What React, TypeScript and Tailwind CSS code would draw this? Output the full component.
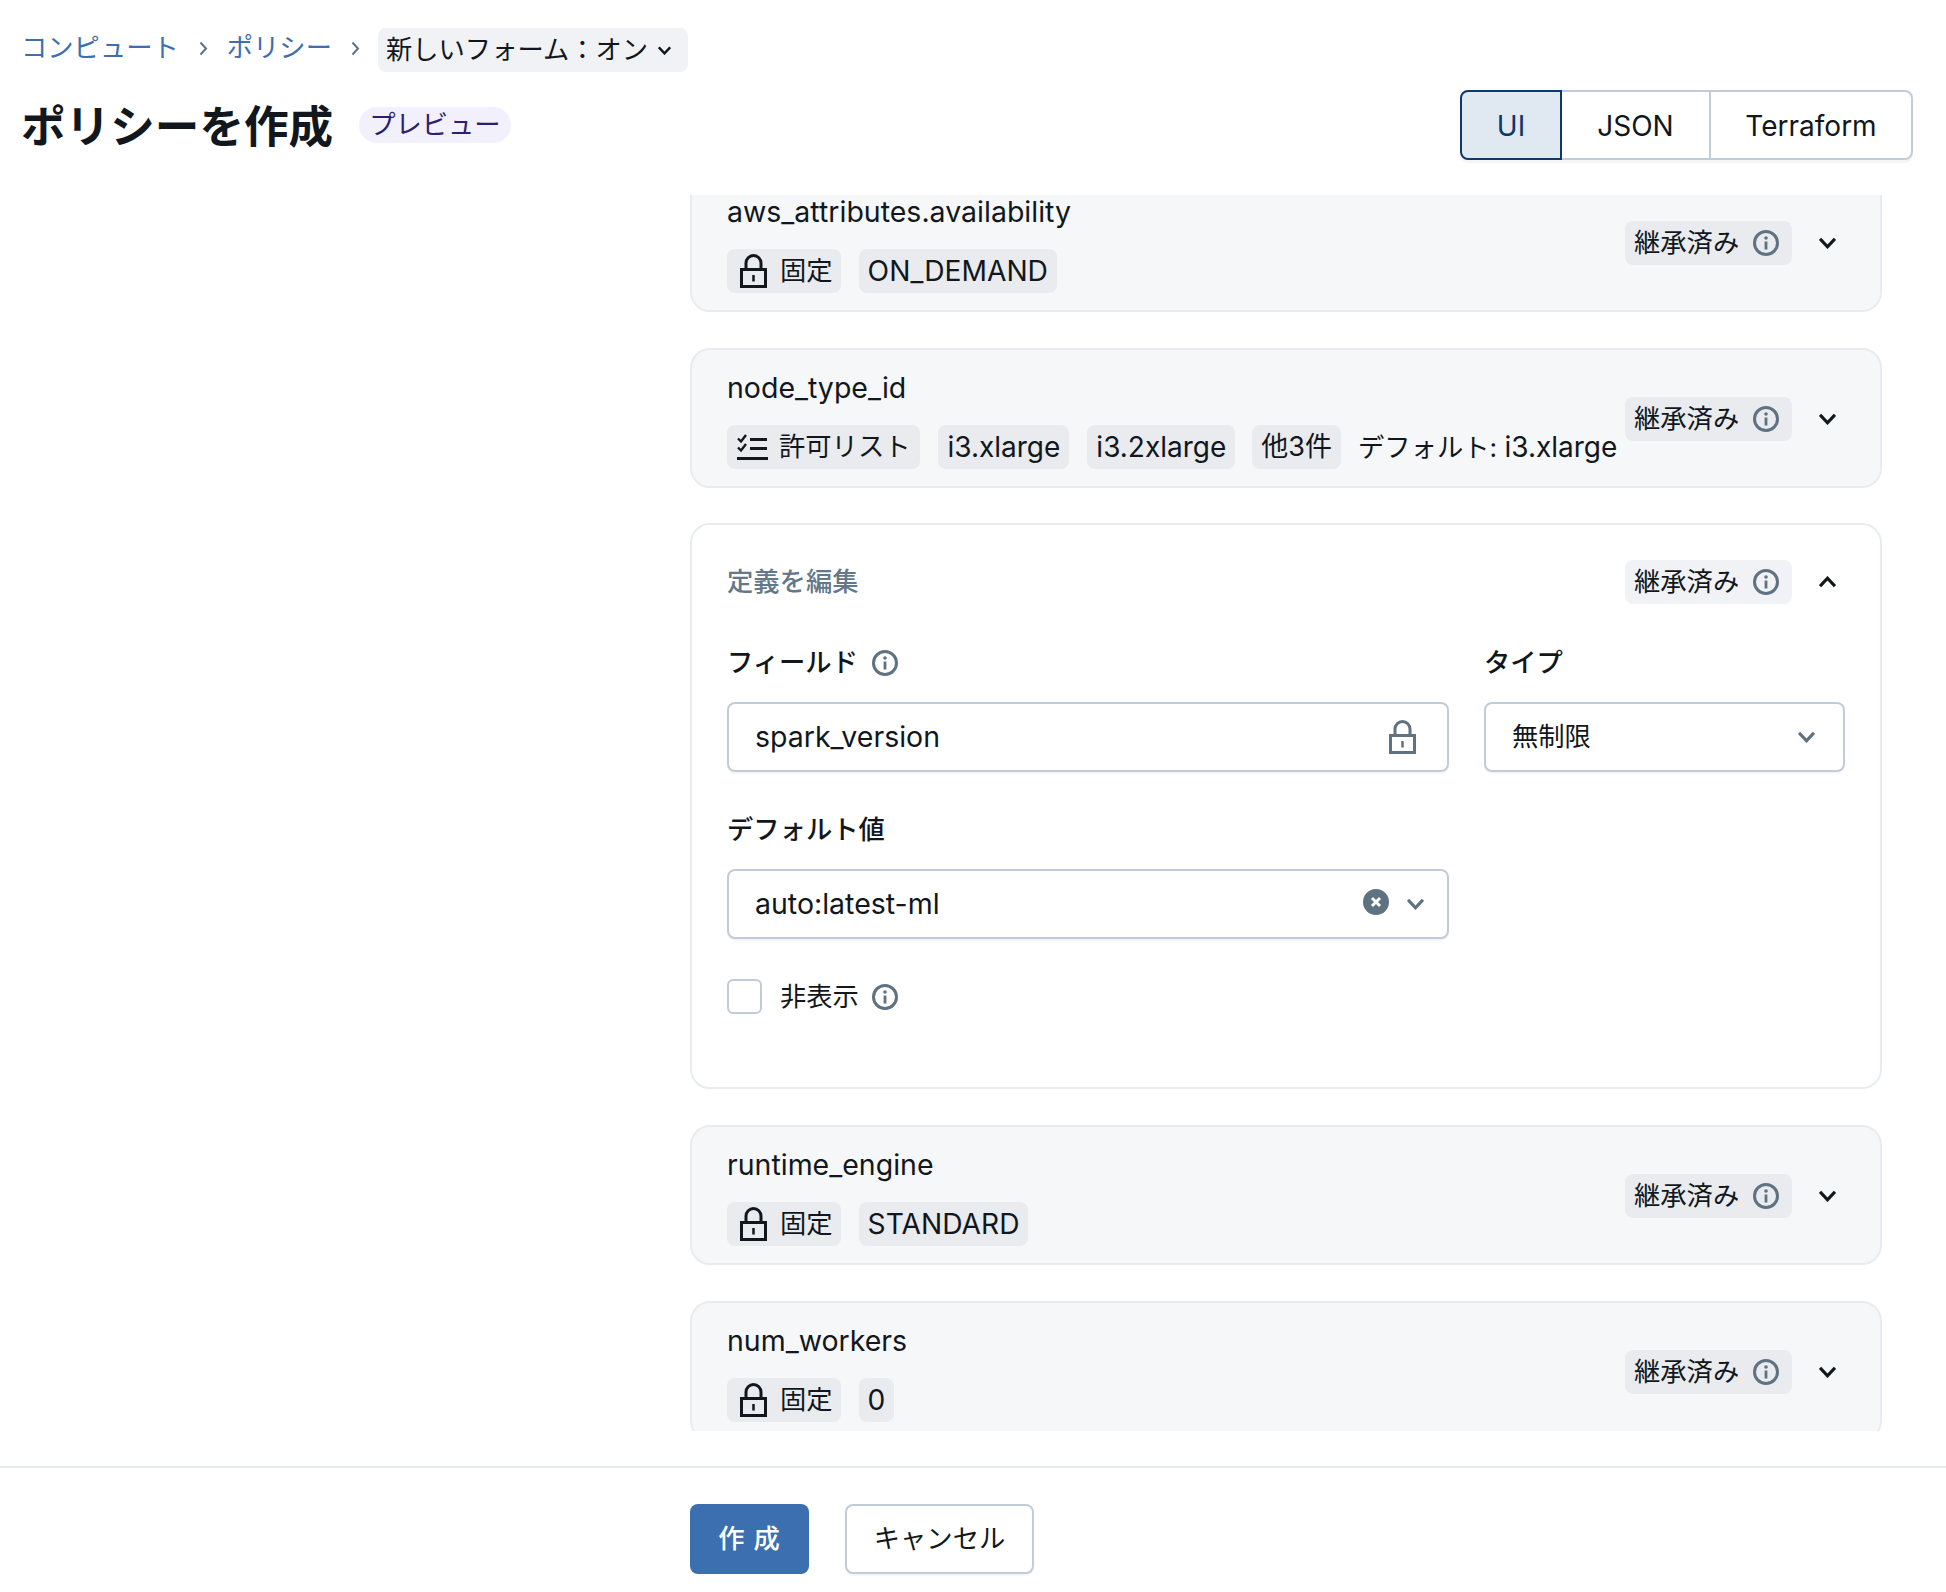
import React from "react";

const ff = "font-['Inter','Noto_Sans_CJK_JP',sans-serif]";

function Lock({ color = "#11171c" }: { color?: string }) {
  return (
    <svg width="27" height="34" viewBox="0 0 27 34" fill="none" stroke={color} strokeWidth="3" className="shrink-0">
      <rect x="1.500" y="15.500" width="24" height="17" />
      <path d="M6 15V9a7.500 7.500 0 0 1 15 0v6" />
      <path d="M13.500 21v6.500" strokeWidth="2.500" />
    </svg>
  );
}

function Info() {
  return (
    <svg width="26" height="26" viewBox="0 0 26 26" fill="none" className="shrink-0">
      <circle cx="13" cy="13" r="11.500" stroke="#5f7281" strokeWidth="3" />
      <rect x="11.600" y="11.500" width="2.800" height="8" fill="#5f7281" />
      <circle cx="13" cy="8" r="1.800" fill="#5f7281" />
    </svg>
  );
}

function Chevron({ up = false, color = "#11171c", w = 17, sw = 3 }: { up?: boolean; color?: string; w?: number; sw?: number }) {
  return (
    <svg width={w} height={Math.round(w * 0.7)} viewBox="0 0 16 11" fill="none" stroke={color} strokeWidth={sw} className="shrink-0">
      <path d={up ? "M1 9.500 8 2l7 7.500" : "M1 1.500 8 9l7-7.500"} />
    </svg>
  );
}

function ListIcon() {
  return (
    <svg width="31" height="26" viewBox="0 0 31 26" fill="none" stroke="#11171c" strokeWidth="3" className="shrink-0">
      <path d="M1 4.500l3 3 5-6.500" strokeWidth="2.400" />
      <path d="M1 13.500l3 3 5-6.500" strokeWidth="2.400" />
      <path d="M13 5.500h17M13 14.500h17M0 24.500h31" />
    </svg>
  );
}

function Crumb() {
  return (
    <svg width="9" height="15" viewBox="0 0 9 15" fill="none" stroke="#5f7281" strokeWidth="2" className="shrink-0">
      <path d="M1.500 1.500 7 7.500l-5.500 6" />
    </svg>
  );
}

function Tag({ children, cls = "px-[9px] gap-[10px]" }: { children: React.ReactNode; cls?: string }) {
  return (
    <span className={`flex h-[44px] items-center whitespace-nowrap rounded-[8px] bg-[#e9ebee] ${cls}`}>
      {children}
    </span>
  );
}

function Inherited({ light = false }: { light?: boolean }) {
  return (
    <span className={`flex h-[44px] w-[167px] items-center gap-[14px] whitespace-nowrap rounded-[8px] pl-[9px] ${light ? "bg-[#f1f2f5]" : "bg-[#e9ebee]"}`}>
      継承済み
      <Info />
    </span>
  );
}

function Toggle({ up = false }: { up?: boolean }) {
  return (
    <div className="ml-[19px] mr-[1px] flex w-[33px] justify-center">
      <Chevron up={up} />
    </div>
  );
}

function Card({ name, children }: { name: string; children: React.ReactNode }) {
  return (
    <div className="flex h-[140px] w-[1192px] shrink-0 items-center justify-between rounded-[20px] border-2 border-[#e8ecf0] bg-[#f6f7f9] pl-[35px] pr-[35px]">
      <div className="min-w-0 pt-[3px]">
        <div className="h-[36px] text-[28.500px] leading-[36px]">{name}</div>
        <div className="mt-[19px] flex items-center gap-[18px] whitespace-nowrap">{children}</div>
      </div>
      <div className="flex items-center pt-[1px]">
        <Inherited />
        <Toggle />
      </div>
    </div>
  );
}

function Fixed({ value }: { value: string }) {
  return (
    <>
      <Tag cls="pl-[13px] pr-[8px] gap-[13px]">
        <Lock />
        固定
      </Tag>
      <Tag cls="px-[9px] text-[28.200px]">{value}</Tag>
    </>
  );
}

function Label({ children }: { children: React.ReactNode }) {
  return <div className="flex h-[36px] items-center gap-[14px] font-medium leading-[36px]">{children}</div>;
}

const inputCls =
  "mt-[21px] flex h-[70px] items-center justify-between rounded-[8px] border-2 border-[#c0cdd8] bg-white pl-[26px] shadow-[0_2px_1px_rgba(0,0,0,0.04)]";

export default function App() {
  return (
    <div className={`flex h-[1592px] w-full flex-col overflow-hidden bg-white text-[26.300px] text-[#11171c] ${ff}`}>
      <div className="shrink-0 pl-[21px] pr-[33px] pt-[28px]">
        <div className="flex h-[44px] items-center">
          <span className="mb-[5px] whitespace-nowrap text-[#3d6fb0]">コンピュート</span>
          <span className="mb-[4px] ml-[20px] mr-[19px]"><Crumb /></span>
          <span className="mb-[5px] whitespace-nowrap text-[#3d6fb0]">ポリシー</span>
          <span className="mb-[4px] ml-[19px] mr-[18px]"><Crumb /></span>
          <span className="flex h-[44px] w-[310px] items-center justify-between whitespace-nowrap rounded-[8px] bg-[#f1f2f5] pb-[-1px] pl-[8px] pr-[17px]">
            新しいフォーム：オン
            <Chevron w={13} sw={3} />
          </span>
        </div>
        <div className="mt-[18px] flex h-[70px] items-center justify-between">
          <div className="flex items-center gap-[26px]">
            <h1 className="whitespace-nowrap pt-[3px] text-[44.600px] font-bold leading-[56px]">ポリシーを作成</h1>
            <span className="flex h-[36px] items-center rounded-full bg-[#f3f0fd] px-[10px] text-[#2d1f6e]">プレビュー</span>
          </div>
          <div className="flex h-[70px] rounded-[8px] shadow-[0_3px_1px_rgba(0,0,0,0.04)]">
            <div className="flex w-[102px] items-center justify-center rounded-l-[8px] border-2 border-[#0e3865] bg-[#e0e8f2] pt-[1px] text-[28px] text-[#0e3865]">UI</div>
            <div className="flex w-[149px] items-center justify-center border-y-2 border-r-2 border-[#c0cdd8] bg-white pt-[1px] text-[28px]">JSON</div>
            <div className="flex w-[202px] items-center justify-center rounded-r-[8px] border-y-2 border-r-2 border-[#c0cdd8] bg-white pt-[1px] text-[28px]">Terraform</div>
          </div>
        </div>
      </div>

      <div className="mt-[35px] h-[1236px] shrink-0 overflow-hidden pl-[690px]">
        <div className="-mt-[23px] flex flex-col">
          <Card name="aws_attributes.availability">
            <Fixed value="ON_DEMAND" />
          </Card>
          <div className="mt-[36px]">
            <Card name="node_type_id">
              <Tag cls="pl-[10px] pr-[10px] gap-[11px]">
                <ListIcon />
                許可リスト
              </Tag>
              <Tag cls="px-[9px] text-[28px]">i3.xlarge</Tag>
              <Tag cls="px-[9px] text-[28px]">i3.2xlarge</Tag>
              <Tag cls="-ml-[1px] px-[9px] text-[27px]">他3件</Tag>
              <span className="-ml-[1px]">デフォルト: <span className="text-[28px]">i3.xlarge</span></span>
            </Card>
          </div>

          <div className="mt-[35px] h-[566px] w-[1192px] shrink-0 rounded-[20px] border-2 border-[#e8ecf0] bg-white pl-[35px] pr-[35px] pt-[35px]">
            <div className="flex items-center justify-between">
              <span className="font-medium text-[#64788a]">定義を編集</span>
              <div className="flex items-center">
                <Inherited light />
                <Toggle up />
              </div>
            </div>
            <div className="mt-[41px] grid grid-cols-[722px_361px] gap-x-[35px]">
              <div>
                <Label>
                  フィールド
                  <Info />
                </Label>
                <div className={`${inputCls} pr-[31px]`}>
                  <span className="text-[28.500px]">spark_version</span>
                  <Lock color="#5f7281" />
                </div>
              </div>
              <div>
                <Label>タイプ</Label>
                <div className={`${inputCls} pr-[28px]`}>
                  <span>無制限</span>
                  <Chevron color="#5f7281" />
                </div>
              </div>
              <div className="mt-[40px]">
                <Label>デフォルト値</Label>
                <div className={`${inputCls} pr-[23px]`}>
                  <span className="text-[28.500px]">auto:latest-ml</span>
                  <div className="flex items-center gap-[18px]">
                    <svg width="26" height="26" viewBox="0 0 26 26" className="-mt-[4px] shrink-0">
                      <circle cx="13" cy="13" r="13" fill="#5f7281" />
                      <path d="M9 9l8 8M17 9l-8 8" stroke="#fff" strokeWidth="3" />
                    </svg>
                    <Chevron color="#5f7281" />
                  </div>
                </div>
              </div>
            </div>
            <div className="mt-[38px] flex items-center">
              <span className="h-[35px] w-[35px] rounded-[6px] border-2 border-[#c0cdd8] bg-white" />
              <span className="ml-[18px] whitespace-nowrap">非表示</span>
              <span className="ml-[13px]"><Info /></span>
            </div>
          </div>

          <div className="mt-[36px]">
            <Card name="runtime_engine">
              <Fixed value="STANDARD" />
            </Card>
          </div>
          <div className="mt-[36px]">
            <Card name="num_workers">
              <Fixed value="0" />
            </Card>
          </div>
        </div>
      </div>

      <div className="mt-[35px] flex-1 border-t-2 border-[#e8ecf0] pl-[690px] pt-[36px]">
        <div className="flex gap-[36px]">
          <button className="flex h-[70px] w-[119px] items-center justify-center rounded-[8px] bg-[#3b6fb0] font-medium tracking-[1px] text-white">作 成</button>
          <button className="flex h-[70px] w-[189px] items-center justify-center rounded-[8px] border-2 border-[#c0cdd8] bg-white shadow-[0_2px_1px_rgba(0,0,0,0.04)]">キャンセル</button>
        </div>
      </div>
    </div>
  );
}
